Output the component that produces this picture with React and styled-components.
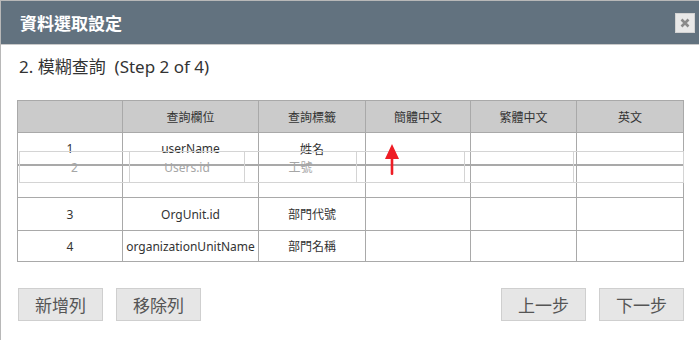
import React from 'react';
import styled, { createGlobalStyle } from 'styled-components';

const GlobalStyle = createGlobalStyle`
  body {
    margin: 0;
    background: #fff;
    font-family: 'Noto Sans', 'Noto Sans CJK TC', sans-serif;
  }
`;

const Dialog = styled.div`
  width: 699px;
  height: 340px;
  box-sizing: border-box;
  border-top: 1px solid #b8b8b8;
  border-left: 1px solid #b8b8b8;
  background: #fff;
`;

const TitleBar = styled.div`
  height: 43px;
  background: #62727f;
  border-bottom: 1px solid #c9c9c9;
  display: flex;
  align-items: center;
  justify-content: space-between;
  padding: 0 4px 0 19px;
`;

const Title = styled.div`
  color: #fff;
  font-size: 17px;
  font-weight: bold;
  font-family: 'Noto Sans CJK TC', sans-serif;
`;

const CloseButton = styled.div`
  width: 20px;
  height: 20px;
  box-sizing: border-box;
  background: #e8e8e8;
  border: 1px solid #d2d2d2;
  display: flex;
  align-items: center;
  justify-content: center;
`;

const StepTitle = styled.div`
  margin-top: 10px;
  padding-left: 18px;
  height: 24px;
  line-height: 24px;
  font-size: 17px;
  color: #333;
`;

const TableWrap = styled.div`
  position: relative;
  margin: 21px 0 0 16px;
  width: 666px;
`;

const Grid = styled.table`
  width: 666px;
  border-collapse: collapse;
  table-layout: fixed;
  font-size: 12px;
  color: #333;

  th, td {
    border: 1px solid #a9a9a9;
    text-align: center;
    padding: 0;
    white-space: nowrap;
  }
  th {
    background: #cbcbcb;
    font-weight: normal;
    height: 31px;
  }
`;

const Row = styled.tr`
  td {
    height: ${p => p.$h || 31}px;
  }
`;

const Placeholder = styled.tr`
  td {
    height: 31px;
    border-top: 2px solid #a9a9a9;
  }
`;

const DragHelper = styled.table`
  position: absolute;
  left: 2px;
  top: 51px;
  width: 664px;
  border-collapse: collapse;
  table-layout: fixed;
  font-size: 12px;
  color: #a6a6a6;

  td {
    border: 1px solid #d4d4d4;
    height: 30px;
    text-align: center;
    padding: 0;
  }
`;

const Arrow = styled.svg`
  position: absolute;
  left: 367px;
  top: 44px;
`;

const ButtonBar = styled.div`
  display: flex;
  justify-content: space-between;
  margin: 26px 0 0 17px;
  width: 666px;
`;

const ButtonGroup = styled.div`
  display: flex;
  gap: 13px;
`;

const Button = styled.button`
  width: 85px;
  height: 33px;
  background: #e6e6e6;
  border: 1px solid #cfcfcf;
  color: #555;
  font-size: 17px;
  font-family: 'Noto Sans CJK TC', sans-serif;
  padding: 0;
`;

const cols = [105, 136, 107, 105, 106, 107];
const helperCols = [110, 115, 112, 108, 109, 110];

const rows = [
  { no: 1, field: 'userName', label: '姓名' },
  { no: 3, field: 'OrgUnit.id', label: '部門代號' },
  { no: 4, field: 'organizationUnitName', label: '部門名稱' },
];

const Cells = ({ r }) => (
  <>
    <td>{r.no}</td>
    <td>{r.field}</td>
    <td>{r.label}</td>
    <td></td>
    <td></td>
    <td></td>
  </>
);

export default function App() {
  return (
    <>
      <GlobalStyle />
      <Dialog>
        <TitleBar>
          <Title>資料選取設定</Title>
          <CloseButton>
            <svg width="10" height="10" viewBox="0 0 10 10">
              <path d="M1.5 1.5 L8.5 8.5 M8.5 1.5 L1.5 8.5" stroke="#8a8a8a" strokeWidth="2.6" />
            </svg>
          </CloseButton>
        </TitleBar>
        <StepTitle>2. 模糊查詢&nbsp; (Step 2 of 4)</StepTitle>
        <TableWrap>
          <Grid>
            <colgroup>
              {cols.map((w, i) => <col key={i} style={{ width: w }} />)}
            </colgroup>
            <thead>
              <tr>
                <th></th>
                <th>查詢欄位</th>
                <th>查詢標籤</th>
                <th>簡體中文</th>
                <th>繁體中文</th>
                <th>英文</th>
              </tr>
            </thead>
            <tbody>
              <Row><Cells r={rows[0]} /></Row>
              <Placeholder>
                <td></td><td></td><td></td><td></td><td></td><td></td>
              </Placeholder>
              <Row $h={32}><Cells r={rows[1]} /></Row>
              <Row $h={30}><Cells r={rows[2]} /></Row>
            </tbody>
          </Grid>
          <DragHelper>
            <colgroup>
              {helperCols.map((w, i) => <col key={i} style={{ width: w }} />)}
            </colgroup>
            <tbody>
              <tr>
                <td>2</td>
                <td>Users.id</td>
                <td>工號</td>
                <td></td>
                <td></td>
                <td></td>
              </tr>
            </tbody>
          </DragHelper>
          <Arrow width="16" height="34" viewBox="0 0 16 34">
            <polygon points="8,0 15,15 1,15" fill="#ee1d25" />
            <rect x="6.7" y="13" width="2.6" height="18" rx="1.2" fill="#ee1d25" />
          </Arrow>
        </TableWrap>
        <ButtonBar>
          <ButtonGroup>
            <Button>新增列</Button>
            <Button>移除列</Button>
          </ButtonGroup>
          <ButtonGroup>
            <Button>上一步</Button>
            <Button>下一步</Button>
          </ButtonGroup>
        </ButtonBar>
      </Dialog>
    </>
  );
}
